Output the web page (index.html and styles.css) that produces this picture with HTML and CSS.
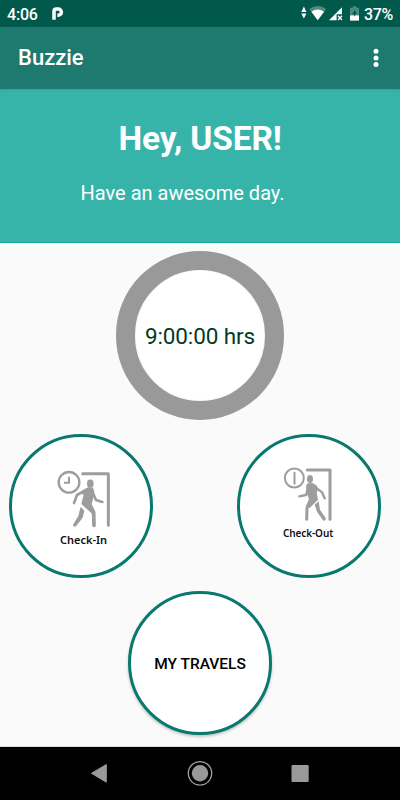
FILE: index.html
```html
<!DOCTYPE html>
<html lang="en">
<head>
<meta charset="utf-8">
<title>Buzzie</title>
<link rel="stylesheet" href="styles.css">
</head>
<body>
<div class="screen">
  <div class="status">
    <span class="clock">4:06</span>
    <svg class="pmark" width="14" height="16" viewBox="0 0 14 16"><path d="M3 13.8V5.400Q3 3 5.400 3H7.200A3 3 0 0 1 7.200 9.300H6.300" fill="none" stroke="#fff" stroke-width="3.500"/></svg>
    <svg class="signals" width="62" height="18" viewBox="300 5 62 18">
      <path d="M301.3 12L303.9 6.5L306.4 12ZM301.3 13.600L303.9 18.6L306.4 13.600Z" fill="#fff"/>
      <path d="M309.3 9Q317.7 3.2 326.2 9L317.7 20.3Z" fill="#4a8c80"/>
      <path d="M311.4 11.8Q317.7 7.2 324.1 11.8L317.7 20.3Z" fill="#fff"/>
      <path d="M342 7.2V14.3H336.6V20.2H329Z" fill="#fff"/>
      <path d="M338 15.8L342 20M342 15.8L338 20" stroke="#fff" stroke-width="1.3"/>
      <path d="M352.8 6.3H356.4V7.8H359V15.3H350V7.8H352.8Z" fill="#4a8c80"/>
      <path d="M350 15.3H359V20.6H350Z" fill="#fff"/>
      <path d="M355.3 9.3L352.2 14.3H354.2V16.8L357 12.6H355.3Z" fill="#00594b"/>
    </svg>
    <span class="battery">37%</span>
  </div>
  <header class="appbar">
    <h1>Buzzie</h1>
    <svg class="more" width="6" height="20" viewBox="0 0 6 20" fill="#fff"><circle cx="3" cy="3.3" r="2.5"/><circle cx="3" cy="10" r="2.5"/><circle cx="3" cy="16.6" r="2.5"/></svg>
  </header>
  <section class="hero">
    <h2>Hey, USER!</h2>
    <p>Have an awesome day.</p>
  </section>
  <main>
    <div class="timer"><span>9:00:00 hrs</span></div>
    <div class="row">
      <button class="round check in">
        <svg width="70" height="70" viewBox="0 0 210 210">
          <g fill="none" stroke="#9d9d9d" stroke-linecap="round" stroke-linejoin="round">
            <circle cx="57" cy="61" r="31" stroke-width="7"/>
            <path d="M57 44V62H42" stroke-width="6" stroke-linecap="butt" stroke-linejoin="miter"/>
            <path d="M98 35H175V190" stroke-width="9"/>
            <path d="M103 87L81 99L72 123" stroke-width="8"/>
            <path d="M128 92L138 114L157 120" stroke-width="8"/>
            <path d="M108 126L131 151L132 190" stroke-width="11"/>
          </g>
          <g fill="#9d9d9d">
            <ellipse cx="121" cy="65" rx="10" ry="12.5"/>
            <path d="M114 76L128 77Q135 84 132 98L125 127L134 144L126 155L94 126L101 98L95 96L99 84Z"/>
            <path d="M92 134L103 146L98 167L78 193Q70 197 69 188L85 162Z"/>
          </g>
        </svg>
        <span>Check-In</span>
      </button>
      <button class="round check out">
        <svg width="70" height="70" viewBox="0 0 210 210">
          <g fill="none" stroke="#9d9d9d" stroke-linecap="round" stroke-linejoin="round">
            <circle cx="58" cy="54" r="28.5" stroke-width="6"/>
            <path d="M58.500 38V71" stroke-width="6"/>
            <path d="M97 30H165V178" stroke-width="9"/>
            <path d="M99 85L93 105L73 109" stroke-width="7"/>
            <path d="M122 82L141 97L149 115" stroke-width="7"/>
            <path d="M117 120L96 143L95 178" stroke-width="9"/>
          </g>
          <g fill="#9d9d9d">
            <ellipse cx="105" cy="57" rx="9" ry="12"/>
            <path d="M98 70L113 69L126 77L128 93L125 97L129 119L104 144L92 139L102 118L95 98L93 78Z"/>
            <path d="M119 134L131 124L135 149L152 174Q154 182 145 182L126 155Z"/>
          </g>
        </svg>
        <span>Check-Out</span>
      </button>
    </div>
    <button class="round travels"><span>MY TRAVELS</span></button>
  </main>
  <nav>
    <svg width="400" height="53" viewBox="0 0 400 53">
      <path d="M91.500 26.300L106.300 17.500V35.200Z" fill="#999" stroke="#999" stroke-linejoin="round"/>
      <circle cx="200" cy="26.300" r="11.700" fill="none" stroke="#aaa" stroke-width="1.200"/>
      <circle cx="200" cy="26.300" r="8.200" fill="#999"/>
      <rect x="291.500" y="18" width="17.200" height="17" rx="1" fill="#999"/>
    </svg>
  </nav>
</div>
</body>
</html>
```
FILE: styles.css
```css
* { box-sizing: border-box; }
body { margin: 0; font-family: Roboto, sans-serif; }
h1, h2, p { margin: 0; }
span, h1, h2, p { white-space: nowrap; }
.screen { width: 400px; height: 800px; display: flex; flex-direction: column; background: #fafafa; overflow: hidden; }
.status { height: 27px; background: #00594b; color: #fff; display: flex; align-items: center; padding: 1px 6px 0 7px; font-size: 16px; font-weight: 500; flex: none; }
.clock { width: 31px; letter-spacing: -0.2px; }
.pmark { margin: 0 0 0 13px; }
.signals { margin-left: auto; }
.battery { width: 30px; margin-left: 2px; letter-spacing: -0.4px; }
.appbar { height: 62px; background: #1e796f; color: #fff; display: flex; align-items: center; justify-content: space-between; padding: 0 21px 0 18px; flex: none; }
.appbar h1 { font-size: 22px; font-weight: 500; line-height: 26px; }
.more { margin-bottom: 1px; }
.hero { height: 154px; background: #37b4aa; border-bottom: 1px solid #12aaa0; box-shadow: inset 0 2px 2px -1px rgba(0, 60, 50, .12); color: #fff; flex: none; display: flex; flex-direction: column; padding-top: 30px; }
.hero h2 { font-size: 33.500px; line-height: 40px; font-weight: 700; letter-spacing: -0.15px; padding-left: 118.500px; }
.hero p { font-size: 20px; line-height: 24px; padding: 22px 0 0 80.500px; }
main { height: 504px; display: flex; flex-direction: column; align-items: center; padding-top: 8px; border-bottom: 1px solid #ddd; flex: none; }
.timer { width: 168.500px; height: 168.500px; border: 19.500px solid #999; border-radius: 50%; background: #fff; display: flex; align-items: center; justify-content: center; flex: none; font-size: 22.500px; letter-spacing: -0.1px; color: #003c25; box-shadow: inset 0 0 2px #e4e4dc; }
.timer span { padding-top: 1px; }
.row { width: 100%; display: flex; justify-content: space-between; padding: 0 19px 0 9px; margin-top: 14.800px; }
.round { width: 144px; height: 144px; border: 3px solid #08796c; border-radius: 50%; background: #fff; padding: 0; flex: none; color: #111; }
.check { display: flex; flex-direction: column; align-items: flex-start; font: 600 11px "Noto Sans", sans-serif; }
.check svg { flex: none; }
.check span { line-height: 14px; }
.in svg { margin: 25px 0 0 38px; }
.in span { margin: 1px 0 0 48px; }
.out svg { margin: 23px 0 0 34.500px; }
.out span { margin: -4px 0 0 43px; font-size: 10px; letter-spacing: -0.1px; }
.travels { margin-top: 13px; font: 500 15.500px Roboto, sans-serif; color: #000; box-shadow: 0 2px 3px rgba(0, 0, 0, .22); }
.travels span { display: block; padding-top: 2px; }
nav { height: 53px; background: #000; display: flex; flex: none; }
```
